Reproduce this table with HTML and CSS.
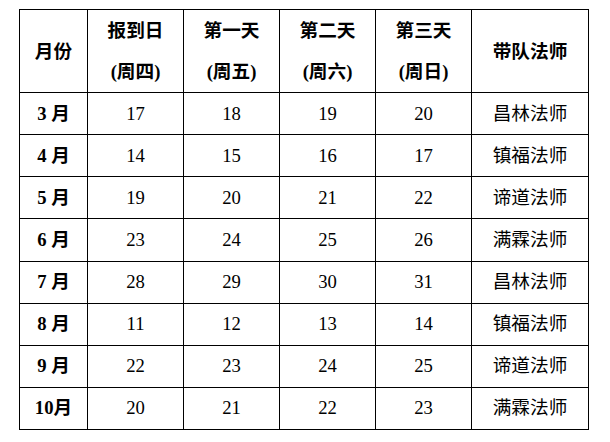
FILE: index.html
```html
<!DOCTYPE html>
<html lang="zh-CN">
<head>
<meta charset="utf-8">
<title>带队法师安排</title>
<link rel="stylesheet" href="styles.css">
</head>
<body>
<table class="schedule">
  <colgroup>
    <col class="c-month">
    <col class="c-day">
    <col class="c-day">
    <col class="c-day">
    <col class="c-day">
    <col class="c-master">
  </colgroup>
  <thead>
    <tr class="head-row">
      <th>月份</th>
      <th>报到日<br>(周四)</th>
      <th>第一天<br>(周五)</th>
      <th>第二天<br>(周六)</th>
      <th>第三天<br>(周日)</th>
      <th>带队法师</th>
    </tr>
  </thead>
  <tbody>
    <tr><th>3 月</th><td>17</td><td>18</td><td>19</td><td>20</td><td>昌林法师</td></tr>
    <tr><th>4 月</th><td>14</td><td>15</td><td>16</td><td>17</td><td>镇福法师</td></tr>
    <tr><th>5 月</th><td>19</td><td>20</td><td>21</td><td>22</td><td>谛道法师</td></tr>
    <tr><th>6 月</th><td>23</td><td>24</td><td>25</td><td>26</td><td>满霖法师</td></tr>
    <tr><th>7 月</th><td>28</td><td>29</td><td>30</td><td>31</td><td>昌林法师</td></tr>
    <tr><th>8 月</th><td>11</td><td>12</td><td>13</td><td>14</td><td>镇福法师</td></tr>
    <tr><th>9 月</th><td>22</td><td>23</td><td>24</td><td>25</td><td>谛道法师</td></tr>
    <tr><th>10月</th><td>20</td><td>21</td><td>22</td><td>23</td><td>满霖法师</td></tr>
  </tbody>
</table>
</body>
</html>
```

FILE: styles.css
```css
html, body {
  margin: 0;
  padding: 0;
  background: #ffffff;
}

body {
  padding: 9px 0 0 19px;
  font-family: "Liberation Serif", "Noto Sans CJK SC", serif;
  color: #000000;
}

.schedule {
  border-collapse: collapse;
  table-layout: fixed;
  width: 570px;
  font-size: 18.67px;
}

.c-month { width: 68px; }
.c-day { width: 96px; }
.c-master { width: 117px; }

.schedule th,
.schedule td {
  border: 1px solid #000000;
  padding: 0;
  text-align: center;
  vertical-align: middle;
  line-height: 24px;
}

.schedule th {
  font-weight: bold;
}

.schedule td {
  font-weight: normal;
}

.head-row {
  height: 83px;
}

.head-row th {
  line-height: 41px;
}

.schedule tbody tr {
  height: 42.125px;
}
```
